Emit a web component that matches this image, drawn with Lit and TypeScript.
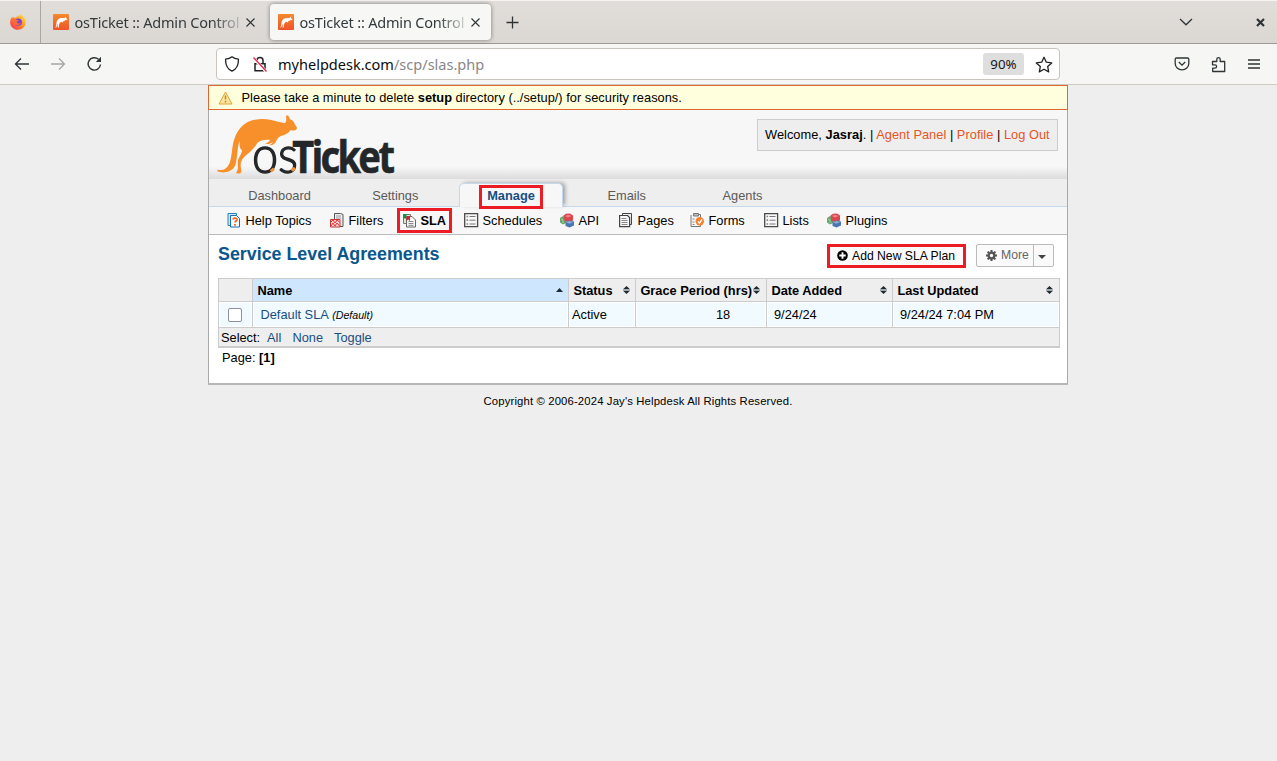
import { LitElement, html, css, svg, nothing } from "lit";
import { customElement, property } from "lit/decorators.js";

const kangaroo = svg`<path transform="translate(27 84)" d="M10 179C27 184 42 175 48 155C55 132 53 108 62 84C70 62 84 44 103 35C125 26 150 26 168 29C186 32 200 38 213 39C218 34 217 28 216 19C218 13 224 14 228 28C236 31 240 35 242 42L249 53C248 62 240 62 229 61C224 70 213 75 203 77C196 79 190 84 187 92C184 101 174 107 166 106C170 103 175 100 177 96C169 101 160 104 154 101C160 98 166 95 168 90C150 88 140 92 130 98C124 111 112 124 98 134C85 143 79 155 80 168L82 186C79 192 71 192 66 188C73 182 72 170 71 158C72 143 84 132 84 121C77 117 76 107 77 92C69 110 71 145 64 165C54 190 24 190 10 184Z"/>`;

const icons: Record<string, unknown> = {
  help: svg`<path d="M1 .5h8.500v12h-8.500z" fill="#cfe6fb" stroke="#2b7fc4"/><path d="M3.500 2.500h6l3 3v8.500h-9z" fill="#f4faff" stroke="#1b6fb8"/><path d="M6 6.500c.3-2 4.200-1.800 4 .2-.2 1.300-2 1.200-2 2.800M8 11v1.800" fill="none" stroke="#f26a1b" stroke-width="1.800"/>`,
  filters: svg`<path d="M4.500 6.500v-6h6l2.500 1v12h-3" fill="#eee" stroke="#555"/><path d="M6 3h5M6 5h5" stroke="#999"/><path d="M.5 6.500h9.500v7.500h-9.500z" fill="#f9d4d4" stroke="#c33"/><path d="M1 9l2-2 2 3 2-3 2.500 2M1 13l2-3 2 3 2-3 2.500 3" fill="none" stroke="#d33"/>`,
  sla: svg`<path d="M1.500 1.500h7v9h-7z" fill="#d8ead8" stroke="#777"/><path d="M1 1h3.500v4.500H1z" fill="#159447"/><path d="M4.500 3.500h5.500l3.500 3.500v7h-9z" fill="#f8f8f8" stroke="#666"/><path d="M4.500 3h3.500v5l-1.800-1.500L4.500 8z" fill="#d8222b"/><path d="M6.500 8.500h5M6.500 10.500h5M6.500 12.300h5" stroke="#888"/>`,
  list: svg`<path d="M.7.700h12.900v13H.7z" fill="#f8f8f8" stroke="#4a4a4a" stroke-width="1.300"/><path d="M5.500 3.500h6M5.500 7.200h6M5.500 11h6" stroke="#777"/><path d="M2.500 3.500h1.600M2.500 7.200h1.600M2.500 11h1.600" stroke="#888" stroke-width="1.700"/>`,
  blocks: svg`<path d="M0 5l3-2 3 2v5l-3 1.500L0 9.500z" fill="#66a76b"/><path d="M1 6l2 1v3" stroke="#a2d2a2" fill="none"/><path d="M3.500 2.500L6 .8l4-.3 3 2v5L9 9.500 4.500 8z" fill="#da4650"/><path d="M5 3l3-1.300L11.500 3 8 4.500z" fill="#f28388"/><path d="M5.500 9l4-1.500 4.500 1v4L9.500 14.500 5.500 13z" fill="#4a77b2"/><path d="M6 9.300l3.500-1.300 3.500 1-3.500 1.700z" fill="#8dafd9"/>`,
  pages: svg`<path d="M3.500 2.500v-2h9v11h-2" fill="#eee" stroke="#444"/><path d="M.6 2.500h8l2 2v9.200H.600z" fill="#f8f8f8" stroke="#444" stroke-width="1.200"/><path d="M2.500 5.500h5M2.500 7.500h6M2.500 9.500h6M2.500 11.500h6" stroke="#888"/>`,
  forms: svg`<path d="M1 2v11.500h9.500v-12H8.500" fill="#f5f5f5" stroke="#777"/><path d="M3.500 .500h5v2.500H3.500z" fill="#bbb" stroke="#777"/><path d="M2.500 6h2M2.500 9h2M2.500 11.500h2" stroke="#888"/><circle cx="9.800" cy="8.300" r="4.200" fill="#f58232"/><path d="M8 8.300l1.500 1.800 2.500-3.800" fill="none" stroke="#fff" stroke-width="1.300"/>`,
};

const sorter = html`<svg class="sort" width="7" height="8" viewBox="0 0 7 8"><path d="M3.500 0L7 3.300H0zM0 4.700h7L3.500 8z" fill="#1d2b33"/><path d="M0 4h7" stroke="#8b9296"/></svg>`;

@customElement("ui-favicon")
class UiFavicon extends LitElement {
  static styles = css`:host{display:block;width:16px;height:16px}svg{display:block}`;
  render() {
    return html`<svg width="16" height="16" viewBox="0 0 16 16"><defs><linearGradient id="g" x2="0" y2="1"><stop stop-color="#f58a2c"/><stop offset="1" stop-color="#f0532a"/></linearGradient></defs><rect width="16" height="16" rx="1" fill="url(#g)"/><path d="M1.800 13.500C4 13 2.700 8.500 4.500 6C6 4 9 3.600 11.500 4.300L12.300 2.500l.8 1.500 1.500 1.400-1.800.7C11 7.200 9.700 7.200 9.500 8.800L8.500 7.800C6.800 8.400 5.600 9.800 5.800 13.500H4.700C4.800 11.500 4.600 10.500 4.800 9.200C3.900 11 4.300 13.800 1.800 13.500Z" fill="#fff"/></svg>`;
  }
}

@customElement("ui-tab")
class UiTab extends LitElement {
  @property({ type: Boolean, reflect: true }) active = false;
  static styles = css`
    :host{display:flex;align-items:center;box-sizing:border-box;width:221px;height:36px;padding-left:8px;border-radius:4px;color:#333a3d;font:14.5px "Noto Sans",sans-serif}
    :host([active]){background:#f7f7f5;box-shadow:0 0 4px rgba(0,0,0,.45)}
    .label{width:168px;margin:0 3px 0 5.500px;overflow:hidden;white-space:nowrap;letter-spacing:-.19px;-webkit-mask-image:linear-gradient(90deg,#000 138px,transparent 171px);mask-image:linear-gradient(90deg,#000 138px,transparent 171px)}
  `;
  render() {
    return html`<ui-favicon></ui-favicon><span class="label">osTicket :: Admin Control Panel</span>
      <svg width="9" height="9" viewBox="0 0 9 9"><path d="M.5.500l8 8M8.500.500l-8 8" stroke="#2e3436" stroke-width="1.100"/></svg>`;
  }
}

@customElement("browser-chrome")
class BrowserChrome extends LitElement {
  static styles = css`
    :host{display:block;font-family:"Noto Sans",sans-serif}
    svg{display:block;flex:none}
    .tabs{display:flex;align-items:center;height:44px;box-sizing:border-box;border-bottom:1px solid #9d9994;border-top:1px solid #f5f4f3;background:linear-gradient(#e1deda,#dbd7d3)}
    .pin{height:42px;display:flex;align-items:center;padding-left:10px;box-sizing:border-box;border-right:1px solid #aaa6a2;width:41px;margin-right:4px}
    .gap{width:4px}
    .plus{margin-left:15px}
    .chev{margin-left:auto;margin-right:63px}
    .x{margin-right:12px}
    .bar{display:flex;align-items:center;height:41px;box-sizing:border-box;border-bottom:1px solid #cfcac4;background:#f6f6f4}
    .url{display:flex;align-items:center;box-sizing:border-box;width:844px;height:32px;border:1px solid #c9c4bd;border-radius:4px;background:#fff;padding-left:7px;margin-left:114px;font-size:14.540px;color:#888}
    .url b{font-weight:400;color:#0c0c0d}
    .addr{margin-left:10px;white-space:nowrap}
    .lock{margin-left:12px}
    .zoom{margin-left:auto;margin-right:11px;width:41px;height:22px;line-height:23px;text-align:center;background:#dedede;border-radius:3px;font-size:13.300px;color:#15141a}
    .back{margin-left:14px}.fwd{margin-left:20px}.rel{margin-left:21px}
    .star{margin-right:6px}
    .pk{margin-left:114px}.pz{margin-left:21px}.mn{margin-left:22px}
  `;
  render() {
    const s = "#2e3436";
    return html`
      <div class="tabs">
        <div class="pin"><svg width="16" height="16" viewBox="0 0 16 16"><defs><linearGradient id="f" x1="1" x2="0" y2="1"><stop stop-color="#fff04a"/><stop offset=".45" stop-color="#ff9324"/><stop offset="1" stop-color="#f5205e"/></linearGradient></defs><path d="M3 2.500l1 1.300L6 3.500 8.500 1 9 3l2-2.800L15 5c2 6-1.500 10.800-7 10.800S-1.500 10.500.8 5L1.500 3.500l.8.800z" fill="url(#f)"/><circle cx="8.300" cy="8.200" r="3.600" fill="#7541e0"/><path d="M3 5.500c2-1 3-.5 4 .5l2 .500-2 1.500c.5 2 3 1.500 4 .5C10.500 12 5 12 4 9z" fill="#ff6a36"/></svg></div>
        <ui-tab></ui-tab><div class="gap"></div><ui-tab active></ui-tab>
        <svg class="plus" width="13" height="13" viewBox="0 0 13 13"><path d="M6.500.500v12M.5 6.500h12" stroke=${s} stroke-width="1.300"/></svg>
        <svg class="chev" width="14" height="8" viewBox="0 0 14 8"><path d="M1 1l6 5.800L13 1" fill="none" stroke=${s} stroke-width="1.300"/></svg>
        <svg class="x" width="9" height="9" viewBox="0 0 9 9"><path d="M1 1l7 7M8 1L1 8" stroke=${s} stroke-width="2.200"/></svg>
      </div>
      <div class="bar">
        <svg class="back" width="16" height="14" viewBox="0 0 16 14"><path d="M7 1.500L1.500 7 7 12.500M1.500 7H15" fill="none" stroke=${s} stroke-width="1.300"/></svg>
        <svg class="fwd" width="16" height="14" viewBox="0 0 16 14"><path d="M9 1.500l5.500 5.500L9 12.500M14.500 7H1" fill="none" stroke="#a5a8a8" stroke-width="1.300"/></svg>
        <svg class="rel" width="15" height="16" viewBox="0 0 15 16"><path d="M11.500 3.300A6.200 6.200 0 1 0 13.500 8.500" fill="none" stroke=${s} stroke-width="1.400"/><path d="M14 .800V6H8.800z" fill=${s}/></svg>
        <div class="url">
          <svg width="16" height="16" viewBox="0 0 16 16"><path d="M8 .8C6 2.500 4 3 1.600 3.200C1.400 9 3.300 13 8 15.200C12.700 13 14.600 9 14.400 3.200C12 3 10 2.500 8 .8Z" fill="none" stroke="#222" stroke-width="1.300" stroke-linejoin="round"/></svg>
          <svg class="lock" width="16" height="17" viewBox="0 0 16 17"><path d="M3 7.800h10v7H3zM5 7.500V4.500a3 3 0 0 1 6 0v3" fill="none" stroke="#222" stroke-width="1.500"/><path d="M1.500 2l13 14" stroke="#fff" stroke-width="3"/><path d="M1.500 1.500l13 14" stroke="#e22850" stroke-width="1.400"/></svg>
          <span class="addr"><b>myhelpdesk.com</b>/scp/slas.php</span>
          <span class="zoom">90%</span>
          <svg class="star" width="18" height="17" viewBox="0 0 18 17"><path d="M9 1.300l2.300 4.900 5.400.7-4 3.700 1 5.300L9 13.300l-4.700 2.600 1-5.300-4-3.700 5.400-.7z" fill="none" stroke="#222" stroke-width="1.300" stroke-linejoin="round"/></svg>
        </div>
        <svg class="pk" width="16" height="14" viewBox="0 0 16 14"><path d="M2.500 1h11q1.300 0 1.300 1.300V6.500a6.800 6.300 0 0 1-13.600 0V2.300Q1.200 1 2.500 1zM4.800 5L8 8.200 11.200 5" fill="none" stroke=${s} stroke-width="1.300"/></svg>
        <svg class="pz" width="15" height="17" viewBox="0 0 15 17"><path d="M1.500 5.500h4.300V3.300a1.700 1.700 0 0 1 3.400 0V5.500h4.500v10H1.700v-3.300h2.200a1.700 1.700 0 0 0 0-3.400H1.500z" fill="none" stroke=${s} stroke-width="1.300" stroke-linejoin="round"/></svg>
        <svg class="mn" width="12" height="11" viewBox="0 0 12 11"><path d="M0 1h12M0 5h12M0 9h12" stroke=${s} stroke-width="1.300"/></svg>
      </div>`;
  }
}

@customElement("app-root")
class AppRoot extends LitElement {
  static styles = css`
    :host{display:block;height:761px;background:#eee;font-family:"Liberation Sans",Arial,sans-serif;font-size:12.800px;color:#000;overflow:hidden}
    svg{display:block;flex:none}
    *{box-sizing:border-box}
    a{color:#184e81}
    .page{width:860px;height:300px;margin-left:208px;border:1px solid #aaa;border-top:0;border-bottom:2px solid #b7b9b9;background:#fff}
    .notice{display:flex;align-items:center;height:25px;margin:0 -1px;border:1px solid #e0692f;background:#ffffdd;padding-left:9px;white-space:pre;letter-spacing:.018px}
    .notice svg{margin-right:8.500px}
    .head{display:flex;justify-content:space-between;height:69px;background:linear-gradient(#f7f7f7 0,#f7f7f7 82%,#dcdcdc 100%);padding:3px 9px 0 6px}
    .logo{overflow:visible}
    .user{width:301px;height:32px;margin-top:6px;border:1px solid #ccc;background:#eee;line-height:30px;padding-left:7px;white-space:nowrap;letter-spacing:.035px}
    .user a{color:#e65524}
    .nav{display:grid;grid-template-columns:repeat(5,104px);column-gap:11.750px;height:28px;padding-left:18.500px;border-bottom:1px solid #c5d9ec;background:#eee;color:#5a5a5a;text-align:center;line-height:33px}
    .nav .on{position:relative;height:24px;margin-top:4px;line-height:24px;border:1px solid #c5d9ec;border-bottom:0;border-radius:5px 5px 0 0;background:#f7f7f7;color:#184e81;font-weight:bold;box-shadow:3px -1px 4px -1px rgba(0,0,0,.35)}
    .mark{position:absolute;border:3px solid #ec1c24}
    .m1{left:19px;top:1px;width:64px;height:24px}
    .sub{display:grid;grid-template-columns:103px 72px 62px 96px 59px 71px 74px 63px auto;height:28px;padding-left:18px;border-bottom:1px solid #bbb;background:#f7f7f7;align-items:center}
    .sub div{display:flex;align-items:center;position:relative;white-space:nowrap}
    .sub svg{margin-right:3.500px}
    .sub .cur{font-weight:bold}
    .m2{left:-5px;top:-5px;width:55px;height:25px}
    .title{display:flex;align-items:center;height:43px;padding:0 13px 3px 9px}
    h2{margin:0 auto 2px 0;font-size:17.850px;color:#0a568e}
    .add{position:relative;display:flex;align-items:center;height:24px;width:139px;padding-left:10px;background:#fafafa;font-size:12.200px;margin:1px 10px 0 0;white-space:nowrap}
    .m3{inset:0}
    .add svg,.more svg{margin-right:4px}
    .more{display:flex;align-items:center;width:78px;height:23px;border:1px solid #bbb;border-radius:2px;background:#fafafa;color:#666;font-size:12.200px;padding-left:9px;line-height:23px}
    .arr{display:flex;align-items:center;border-left:1px solid #bbb;height:21px;margin-left:auto;width:20px;padding-left:4px;padding-top:4px}
    .table{width:842px;margin-left:9px;border:1px solid #ccc;border-bottom-width:2px;background:#eee}
    .row{display:grid;grid-template-columns:34px 316px 67px 131px 126px 166px}
    .row>div{display:flex;align-items:center;border-right:1px solid #ccc;border-bottom:1px solid #ccc;white-space:nowrap}
    .row>div:last-child{border-right:0}
    .h{height:23px;font-weight:bold;letter-spacing:0}
    .h>div{padding:1px 5px 0 4.400px}
    .h>div:last-child,.h>div:nth-child(4){padding-right:6px}
    .sort{margin-left:auto;margin-top:-2px}
    .h .s{background:#cfe6ff}
    .r{height:26px}
    .r>div{background:#f0faff;box-shadow:inset 0 0 0 1px #fff;padding-left:3px}
    .r .date{padding-left:7px}
    .r .name{padding-left:7.500px}
    .r .hours{padding-left:80px}
    .cb{width:14px;height:14px;border:1px solid #8f8f9d;border-radius:2px;background:#fff;margin-left:6px}
    i{font-size:10.600px;margin-left:3.500px}
    .sel{height:18px;line-height:19px;padding-left:2px;display:grid;grid-template-columns:46px 25.500px 41.500px auto}
    .pg{padding:1px 0 0 13px;line-height:17px}
    .copy{text-align:center;font-size:11.300px;letter-spacing:.145px;line-height:14px;margin-top:9px;width:1276px}
  `;
  private item(icon: string, label: string, cur = false) {
    return html`<div class=${cur ? "cur" : ""}><svg width="15" height="15" viewBox="0 0 15 15">${icons[icon]}</svg>${label}${cur ? html`<span class="mark m2"></span>` : nothing}</div>`;
  }
  render() {
    return html`
      <browser-chrome></browser-chrome>
      <div class="page">
        <div class="notice"><svg width="15" height="14" viewBox="0 0 15 14"><path d="M7.500 1L14 13H1z" fill="#fde7a0" stroke="#e0a23a" stroke-linejoin="round"/><path d="M7.500 4.500v4M7.500 9.800v1.600" stroke="#c9871f" stroke-width="1.500"/></svg><span>Please take a minute to delete <b>setup</b> directory (../setup/) for security reasons.</span></div>
        <div class="head">
          <svg class="logo" width="180" height="63" viewBox="30 93 540 189"><g fill="#f7902a">${kangaroo}</g>
            <text x="141" y="273" font-family="Lato" font-weight="300" font-size="155" textLength="138" lengthAdjust="spacingAndGlyphs" fill="#242729" stroke="#242729" stroke-width="4">os</text>
            <text x="262" y="272" font-family="Noto Sans" font-weight="700" font-size="132" letter-spacing="-9" textLength="300" lengthAdjust="spacingAndGlyphs" fill="#242729" stroke="#242729" stroke-width="2">Ticket</text>
            <path d="M197 268l10-8M260 266l10-8" stroke="#f7902a" stroke-width="9"/></svg>
          <div class="user">Welcome, <b>Jasraj</b>. | <a>Agent Panel</a> | <a>Profile</a> | <a>Log Out</a></div>
        </div>
        <div class="nav"><span>Dashboard</span><span>Settings</span><span class="on">Manage<span class="mark m1"></span></span><span>Emails</span><span>Agents</span></div>
        <div class="sub">
          ${this.item("help", "Help Topics")}${this.item("filters", "Filters")}${this.item("sla", "SLA", true)}
          ${this.item("list", "Schedules")}${this.item("blocks", "API")}${this.item("pages", "Pages")}
          ${this.item("forms", "Forms")}${this.item("list", "Lists")}${this.item("blocks", "Plugins")}
        </div>
        <div class="title"><h2>Service Level Agreements</h2>
          <div class="add"><svg width="11" height="11" viewBox="0 0 11 11"><circle cx="5.500" cy="5.500" r="5.300"/><path d="M5.500 2.300v6.400M2.300 5.500h6.400" stroke="#fff" stroke-width="1.900"/></svg>Add New SLA Plan<span class="mark m3"></span></div>
          <div class="more"><svg width="11" height="11" viewBox="0 0 11 11"><circle cx="5.500" cy="5.500" r="2.900" fill="none" stroke="#555" stroke-width="2.400"/><path d="M5.500 0v2M5.500 9v2M0 5.500h2M9 5.500h2M1.600 1.600L3 3M8 8l1.400 1.400M9.400 1.600L8 3M3 8L1.600 9.400" stroke="#555" stroke-width="2"/></svg>More<span class="arr"><svg width="8" height="4" viewBox="0 0 8 4"><path d="M0 0h8L4 4z" fill="#444"/></svg></span></div>
        </div>
        <div class="table">
          <div class="row h"><div></div><div class="s">Name<svg class="sort" width="7" height="4" viewBox="0 0 7 4"><path d="M3.500 0L7 4H0z" fill="#1d2b33"/></svg></div><div>Status${sorter}</div><div>Grace Period (hrs)${sorter}</div><div>Date Added${sorter}</div><div>Last Updated${sorter}</div></div>
          <div class="row r"><div><span class="cb"></span></div><div class="name"><a>Default SLA</a><i>(Default)</i></div><div>Active</div><div class="hours">18</div><div class="date">9/24/24</div><div class="date">9/24/24 7:04 PM</div></div>
          <div class="sel"><span>Select:</span><a>All</a><a>None</a><a>Toggle</a></div>
        </div>
        <div class="pg">Page: <b>[1]</b></div>
      </div>
      <div class="copy">Copyright © 2006-2024 Jay's Helpdesk All Rights Reserved.</div>`;
  }
}
